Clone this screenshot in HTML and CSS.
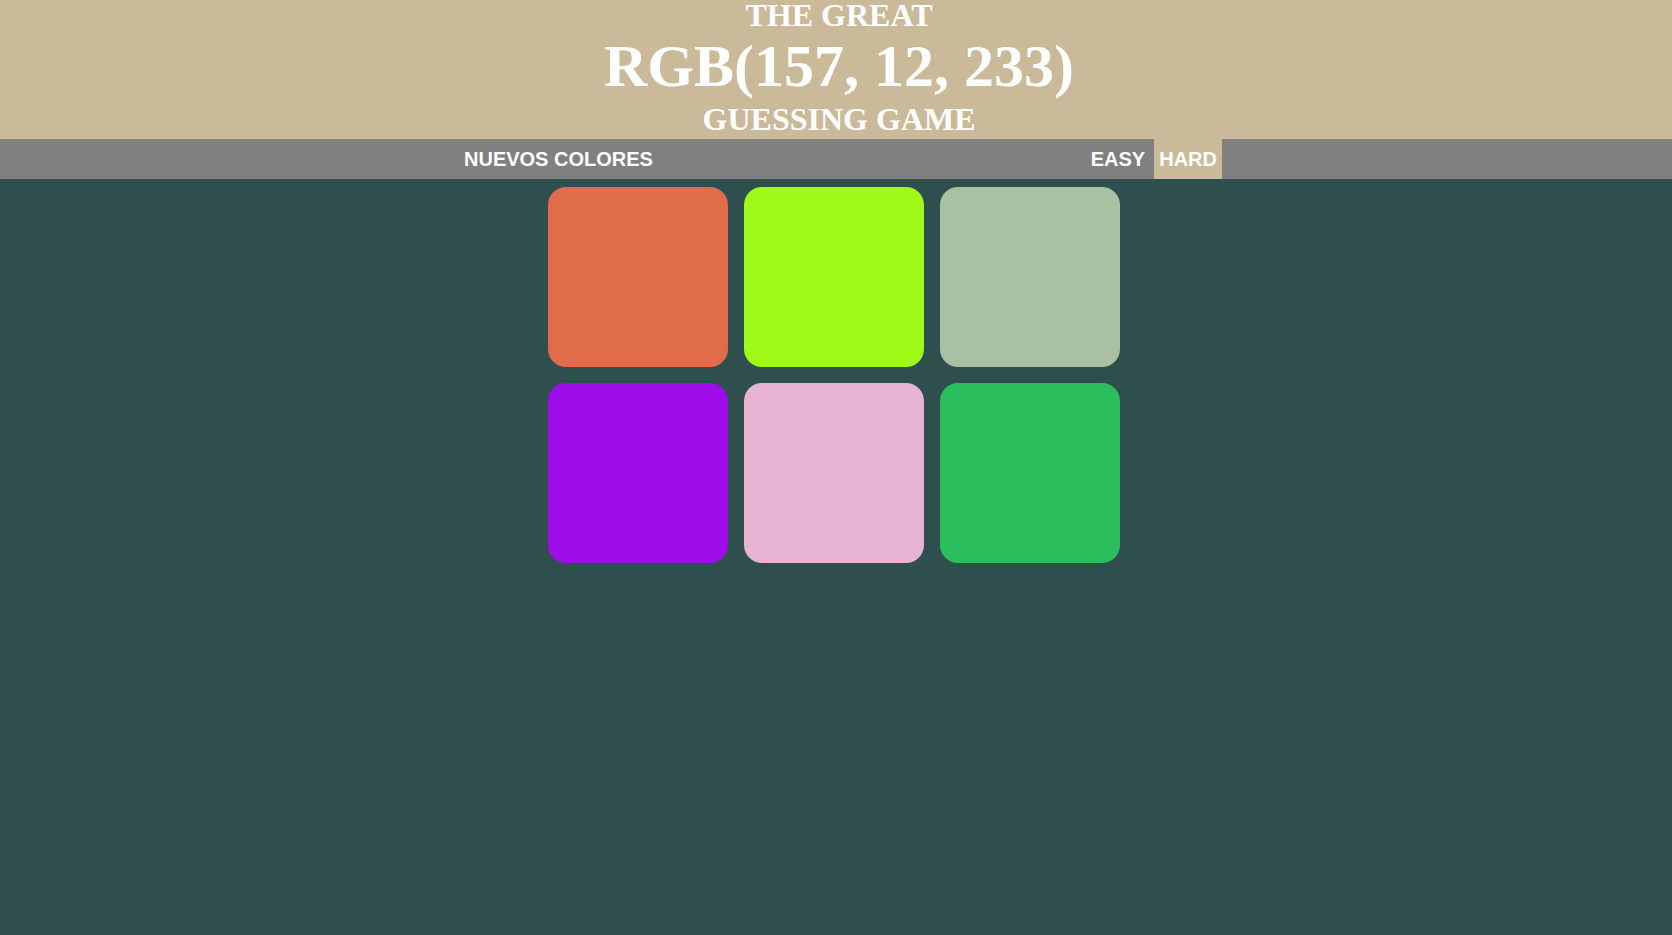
FILE: index.html
```html
<!DOCTYPE html>
<html lang="es">
<head>
<meta charset="utf-8">
<title>The Great RGB Guessing Game</title>
<link rel="stylesheet" href="styles.css">
</head>
<body>
<header class="header">
  <div class="title-small">THE GREAT</div>
  <div class="title-big">RGB(157, 12, 233)</div>
  <div class="title-small title-last">GUESSING GAME</div>
</header>
<nav class="nav">
  <div class="nav-inner">
    <button class="btn btn-new">NUEVOS COLORES</button>
    <span class="spacer"></span>
    <button class="btn btn-easy">EASY</button>
    <button class="btn btn-selected">HARD</button>
  </div>
</nav>
<main class="board">
  <div class="square sq-orange"></div>
  <div class="square sq-lime"></div>
  <div class="square sq-sage"></div>
  <div class="square sq-purple"></div>
  <div class="square sq-pink"></div>
  <div class="square sq-green"></div>
</main>
</body>
</html>
```
FILE: styles.css
```css
html, body {
  margin: 0;
  padding: 0;
}
body {
  background: #2f4f4f;
  min-height: 935px;
  font-family: "Liberation Serif", "Times New Roman", serif;
}
.header {
  background: #cbba9a;
  color: #ffffff;
  text-align: center;
  font-weight: bold;
  padding-bottom: 2px;
  padding-left: 6px;
}
.title-small {
  font-size: 32px;
  line-height: 30px;
}
.title-big {
  font-size: 60px;
  line-height: 72px;
}
.title-last {
  line-height: 35px;
}
.nav {
  background: #808080;
  height: 40px;
}
.nav-inner {
  width: 772px;
  margin: 0 auto;
  padding-left: 9px;
  display: flex;
  height: 40px;
  box-sizing: border-box;
}
.btn {
  border: none;
  background: none;
  color: #ffffff;
  font-family: "Liberation Sans", Arial, sans-serif;
  font-weight: bold;
  font-size: 20px;
  padding: 0 5px;
  margin: 0;
  height: 40px;
  line-height: 40px;
}
.btn-easy {
  margin-right: 4px;
}
.btn-selected {
  background: #cbba9a;
}
.spacer {
  flex: 1;
}
.board {
  width: 572px;
  margin: 8px auto 0;
  padding-right: 4px;
  display: grid;
  grid-template-columns: repeat(3, 180px);
  grid-auto-rows: 180px;
  gap: 16px;
}
.square {
  border-radius: 18px;
}
.sq-orange { background: #e06c4a; }
.sq-lime { background: #a0fa18; }
.sq-sage { background: #aac0a2; }
.sq-purple { background: #9d0ce9; }
.sq-pink { background: #e6b4d2; }
.sq-green { background: #2abf5c; }
```
